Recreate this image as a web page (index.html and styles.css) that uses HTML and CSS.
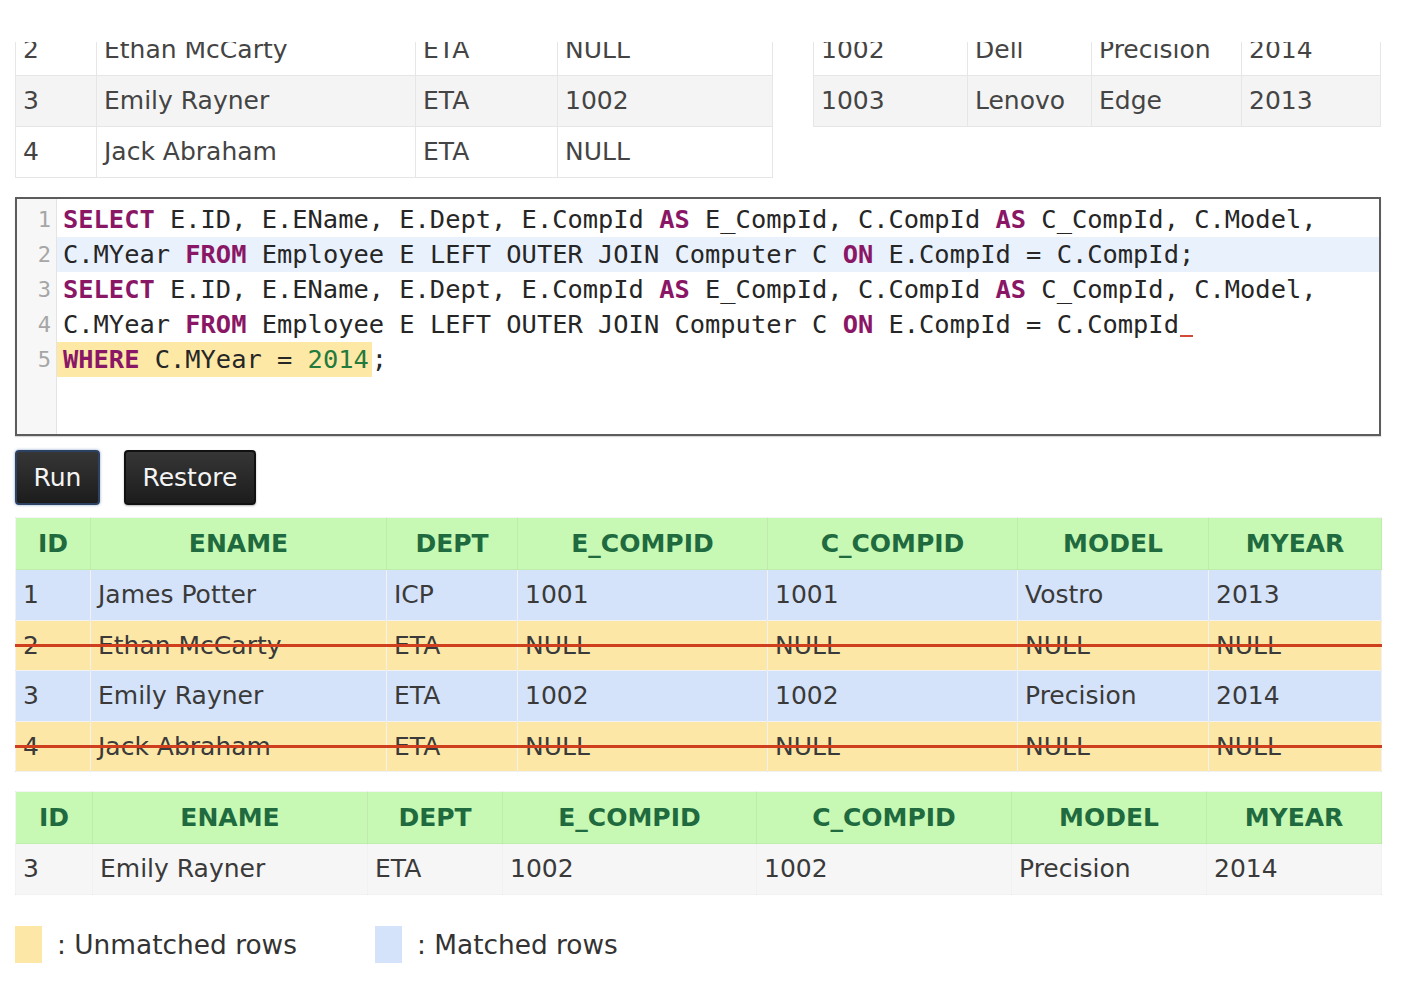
FILE: index.html
```html
<!DOCTYPE html>
<html>
<head>
<meta charset="utf-8">
<link rel="stylesheet" href="styles.css">
</head>
<body>
<div class="page">
  <div class="preview">
    <table class="src src-emp">
      <colgroup><col style="width:81px"><col style="width:319px"><col style="width:142px"><col style="width:215px"></colgroup>
      <tr><td>2</td><td>Ethan McCarty</td><td>ETA</td><td>NULL</td></tr>
      <tr class="alt"><td>3</td><td>Emily Rayner</td><td>ETA</td><td>1002</td></tr>
      <tr><td>4</td><td>Jack Abraham</td><td>ETA</td><td>NULL</td></tr>
    </table>
    <table class="src src-comp">
      <colgroup><col style="width:154px"><col style="width:124px"><col style="width:150px"><col style="width:139px"></colgroup>
      <tr><td>1002</td><td>Dell</td><td>Precision</td><td>2014</td></tr>
      <tr class="alt"><td>1003</td><td>Lenovo</td><td>Edge</td><td>2013</td></tr>
    </table>
  </div>

  <div class="editor">
    <div class="gutter">
      <div class="ln">1</div><div class="ln">2</div><div class="ln">3</div><div class="ln">4</div><div class="ln">5</div>
    </div>
    <div class="code">
      <div class="line"><span class="kw">SELECT</span> E.ID, E.EName, E.Dept, E.CompId <span class="kw">AS</span> E_CompId, C.CompId <span class="kw">AS</span> C_CompId, C.Model,</div>
      <div class="line active">C.MYear <span class="kw">FROM</span> Employee E LEFT OUTER JOIN Computer C <span class="kw">ON</span> E.CompId = C.CompId;</div>
      <div class="line"><span class="kw">SELECT</span> E.ID, E.EName, E.Dept, E.CompId <span class="kw">AS</span> E_CompId, C.CompId <span class="kw">AS</span> C_CompId, C.Model,</div>
      <div class="line">C.MYear <span class="kw">FROM</span> Employee E LEFT OUTER JOIN Computer C <span class="kw">ON</span> E.CompId = C.CompId<span class="cursor"></span></div>
      <div class="line"><span class="mark"><span class="kw">WHERE</span> C.MYear = <span class="num">2014</span></span>;</div>
    </div>
  </div>

  <div class="buttons">
    <button class="btn btn-run">Run</button>
    <button class="btn">Restore</button>
  </div>

  <table class="result">
    <colgroup><col style="width:75px"><col style="width:296px"><col style="width:131px"><col style="width:250px"><col style="width:250px"><col style="width:191px"><col style="width:173px"></colgroup>
    <tr><th>ID</th><th>ENAME</th><th>DEPT</th><th>E_COMPID</th><th>C_COMPID</th><th>MODEL</th><th>MYEAR</th></tr>
    <tr class="matched"><td>1</td><td>James Potter</td><td>ICP</td><td>1001</td><td>1001</td><td>Vostro</td><td>2013</td></tr>
    <tr class="unmatched"><td>2</td><td>Ethan McCarty</td><td>ETA</td><td>NULL</td><td>NULL</td><td>NULL</td><td>NULL</td></tr>
    <tr class="matched"><td>3</td><td>Emily Rayner</td><td>ETA</td><td>1002</td><td>1002</td><td>Precision</td><td>2014</td></tr>
    <tr class="unmatched"><td>4</td><td>Jack Abraham</td><td>ETA</td><td>NULL</td><td>NULL</td><td>NULL</td><td>NULL</td></tr>
  </table>

  <table class="result result-final">
    <colgroup><col style="width:77px"><col style="width:275px"><col style="width:135px"><col style="width:254px"><col style="width:255px"><col style="width:195px"><col style="width:175px"></colgroup>
    <tr><th>ID</th><th>ENAME</th><th>DEPT</th><th>E_COMPID</th><th>C_COMPID</th><th>MODEL</th><th>MYEAR</th></tr>
    <tr class="plain"><td>3</td><td>Emily Rayner</td><td>ETA</td><td>1002</td><td>1002</td><td>Precision</td><td>2014</td></tr>
  </table>

  <div class="legend">
    <span class="swatch swatch-unmatched"></span>
    <span class="legend-text">: Unmatched rows</span>
    <span class="swatch swatch-matched"></span>
    <span class="legend-text">: Matched rows</span>
  </div>
</div>
</body>
</html>
```

FILE: styles.css
```css
html, body {
  margin: 0;
  padding: 0;
  background: #ffffff;
}

body {
  font-family: "DejaVu Sans", Verdana, sans-serif;
  color: #3a3a3a;
}

.page {
  padding: 42px 0 40px 15px;
  width: 1366px;
}

/* top source tables (scrolled, clipped) */
.preview {
  display: flex;
  align-items: flex-start;
  gap: 40px;
  overflow: hidden;
}

.src {
  border-collapse: collapse;
  table-layout: fixed;
  margin-top: -18px;
  font-size: 25px;
  color: #444;
  border: 1px solid #e3e3e3;
}

.src-emp { width: 757px; }
.src-comp { width: 567px; }

.src td {
  border: 1px solid #e6e6e6;
  padding: 0 7px;
  height: 50px;
  line-height: 50px;
  white-space: nowrap;
  background: #ffffff;
}

.src tr.alt td {
  background: #f4f4f4;
}

/* editor */
.editor {
  margin-top: 19px;
  height: 239px;
  box-sizing: border-box;
  border: 2px solid #5c5c5c;
  display: flex;
  background: #ffffff;
  box-shadow: 0 1px 1px rgba(0,0,0,0.15);
  font-family: "DejaVu Sans Mono", Consolas, monospace;
  font-size: 25.4px;
}

.gutter {
  width: 39px;
  background: #f7f7f7;
  border-right: 1px solid #e4e4e4;
  padding-top: 3px;
  flex: none;
}

.ln {
  height: 35px;
  line-height: 35px;
  text-align: right;
  padding-right: 5px;
  color: #a6a6a6;
  font-size: 22px;
}

.code {
  flex: 1;
  padding-top: 3px;
  color: #262626;
}

.line {
  height: 35px;
  line-height: 35px;
  padding-left: 6px;
  white-space: pre;
}

.line.active {
  background: #e9f1fd;
}

.kw {
  color: #8a1766;
  font-weight: bold;
}

.num {
  color: #247a3c;
}

.mark {
  background: #fde8a6;
  margin-left: -6px;
  padding: 0 3px 0 6px;
  display: inline-block;
  height: 35px;
}

.cursor {
  display: inline-block;
  width: 13px;
  height: 2px;
  margin-left: 1px;
  background: #d24a3a;
  vertical-align: -4px;
}

/* buttons */
.buttons {
  margin-top: 14px;
  display: flex;
  gap: 24px;
}

.btn {
  height: 55px;
  padding: 0 16.5px;
  font-family: "DejaVu Sans", Verdana, sans-serif;
  font-size: 25px;
  color: #f4f4f4;
  background: linear-gradient(#363636, #1c1c1c);
  border: 2px solid #111;
  border-radius: 4px;
  box-shadow: 0 1px 2px rgba(0,0,0,0.3);
  cursor: pointer;
}

.btn-run {
  border-color: #2b4262;
  box-shadow: 0 0 3px rgba(60,100,160,0.6);
}

/* result tables */
.result {
  margin-top: 12px;
  width: 1366px;
  border-collapse: collapse;
  table-layout: fixed;
  font-size: 25px;
}

.result th {
  background: #c7f8b4;
  color: #1f6a3e;
  font-weight: bold;
  text-align: center;
  height: 51px;
  line-height: 51px;
  padding: 0;
  border: 1px solid rgba(0,0,0,0.04);
  white-space: nowrap;
}

.result td {
  position: relative;
  padding: 0 7px;
  line-height: 49.5px;
  height: 49.5px;
  border: 1px solid rgba(0,0,0,0.05);
  white-space: nowrap;
  color: #3a3a3a;
}

.result tr.matched td {
  background: #d4e3f9;
}

.result tr.unmatched td {
  background: #fde7a6;
}

.result tr.unmatched td::after {
  content: "";
  position: absolute;
  left: -1px;
  right: -1px;
  top: 50%;
  height: 3px;
  margin-top: -1.5px;
  background: #cf3f1d;
}

.result-final {
  margin-top: 19px;
}

.result tr.plain td {
  background: #f6f6f6;
  line-height: 50px;
  height: 50px;
}

/* legend */
.legend {
  margin-top: 31px;
  display: flex;
  align-items: center;
  font-size: 26.4px;
  color: #333;
}

.swatch {
  width: 27px;
  height: 37px;
  flex: none;
}

.swatch-unmatched { background: #fde7a6; }
.swatch-matched { background: #d4e3f9; margin-left: 78px; }

.legend-text {
  margin-left: 15px;
}
```
